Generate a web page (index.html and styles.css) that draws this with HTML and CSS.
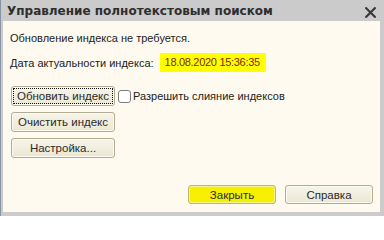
FILE: index.html
```html
<!DOCTYPE html>
<html>
<head>
<meta charset="utf-8">
<link rel="stylesheet" href="styles.css">
</head>
<body>
<div class="window">
  <div class="titlebar">
    <span class="title">Управление полнотекстовым поиском</span>
    <svg class="close" width="11" height="11" viewBox="0 0 11 11"><path d="M1.2 1.2 L9.8 9.8 M9.8 1.2 L1.2 9.8" stroke="#3a3a3a" stroke-width="2.2" stroke-linecap="square"/></svg>
  </div>
  <div class="content">
    <div class="status">Обновление индекса не требуется.</div>
    <div class="daterow">
      <span class="label">Дата актуальности индекса:</span>
      <span class="date">18.08.2020 15:36:35</span>
    </div>
    <div class="actions">
      <div class="row">
        <button class="btn focus">Обновить индекс</button>
        <label class="check"><span class="box"></span>Разрешить слияние индексов</label>
      </div>
      <div class="row"><button class="btn">Очистить индекс</button></div>
      <div class="row"><button class="btn">Настройка...</button></div>
    </div>
    <div class="footer">
      <button class="btn bottom primary">Закрыть</button>
      <button class="btn bottom">Справка</button>
    </div>
  </div>
</div>
</body>
</html>
```
FILE: styles.css
```css
html, body { margin: 0; padding: 0; }
body {
  width: 384px; height: 216px; overflow: hidden;
  font-family: "Liberation Sans", Arial, sans-serif;
  font-size: 11px;
}
.window {
  width: 384px; height: 216px; box-sizing: border-box;
  background: #cbcbcb;
  border-left: 1px solid #8893a6;
  display: flex; flex-direction: column;
}
.titlebar {
  height: 21px; box-sizing: border-box;
  display: flex; align-items: center; justify-content: space-between;
  padding: 0 8px 0 6px;
}
.title {
  font-weight: bold; color: #2e2e2e;
  font-family: "DejaVu Sans", "Liberation Sans", sans-serif;
  font-size: 12px;
}
.close { display: block; margin-top: 3px; }
.content {
  flex: 1;
  margin: 0 4px 4px 2px;
  background: #fffaef;
  padding: 10px 6px 0 7px;
  display: flex; flex-direction: column;
  color: #222;
}
.status { height: 14px; line-height: 14px; }
.daterow {
  margin-top: 8px;
  display: flex; align-items: center; height: 19px;
}
.label { line-height: 14px; }
.date {
  margin-left: 6px;
  background: #ffff00;
  color: #7a2a17;
  height: 19px; line-height: 19px;
  padding: 0 6px 0 5px;
  letter-spacing: -0.3px;
}
.actions {
  margin-top: 14px;
  display: flex; flex-direction: column; gap: 6px;
}
.row { display: flex; align-items: center; }
.btn {
  font-family: inherit; font-size: 11.5px; color: #2a2a2a;
  width: 104px; height: 20px; box-sizing: border-box;
  margin: 0 0 0 1px; padding: 0;
  border: 1px solid #b2ad92; border-radius: 3px;
  background: linear-gradient(#f7f5ea, #ebe7d2);
  box-shadow: inset 0 0 0 1px #fbfaf3;
}
.btn.focus {
  outline: 1px dotted #111; outline-offset: -3px;
}
.check { display: flex; align-items: center; margin-left: 3px; color: #222; }
.box {
  width: 11px; height: 11px; border: 1px solid #7d7d7d; border-radius: 3px;
  background: #fff; margin-right: 2px;
}
.footer {
  margin-top: auto; margin-bottom: 8px;
  display: flex; justify-content: flex-end; gap: 8px;
  padding-right: 1px;
}
.btn.bottom { width: 88px; height: 19px; }
.btn.primary {
  background: #f6f000;
  border-color: #bcb77a;
  box-shadow: inset 0 0 0 1px #f9f48a;
}
```
